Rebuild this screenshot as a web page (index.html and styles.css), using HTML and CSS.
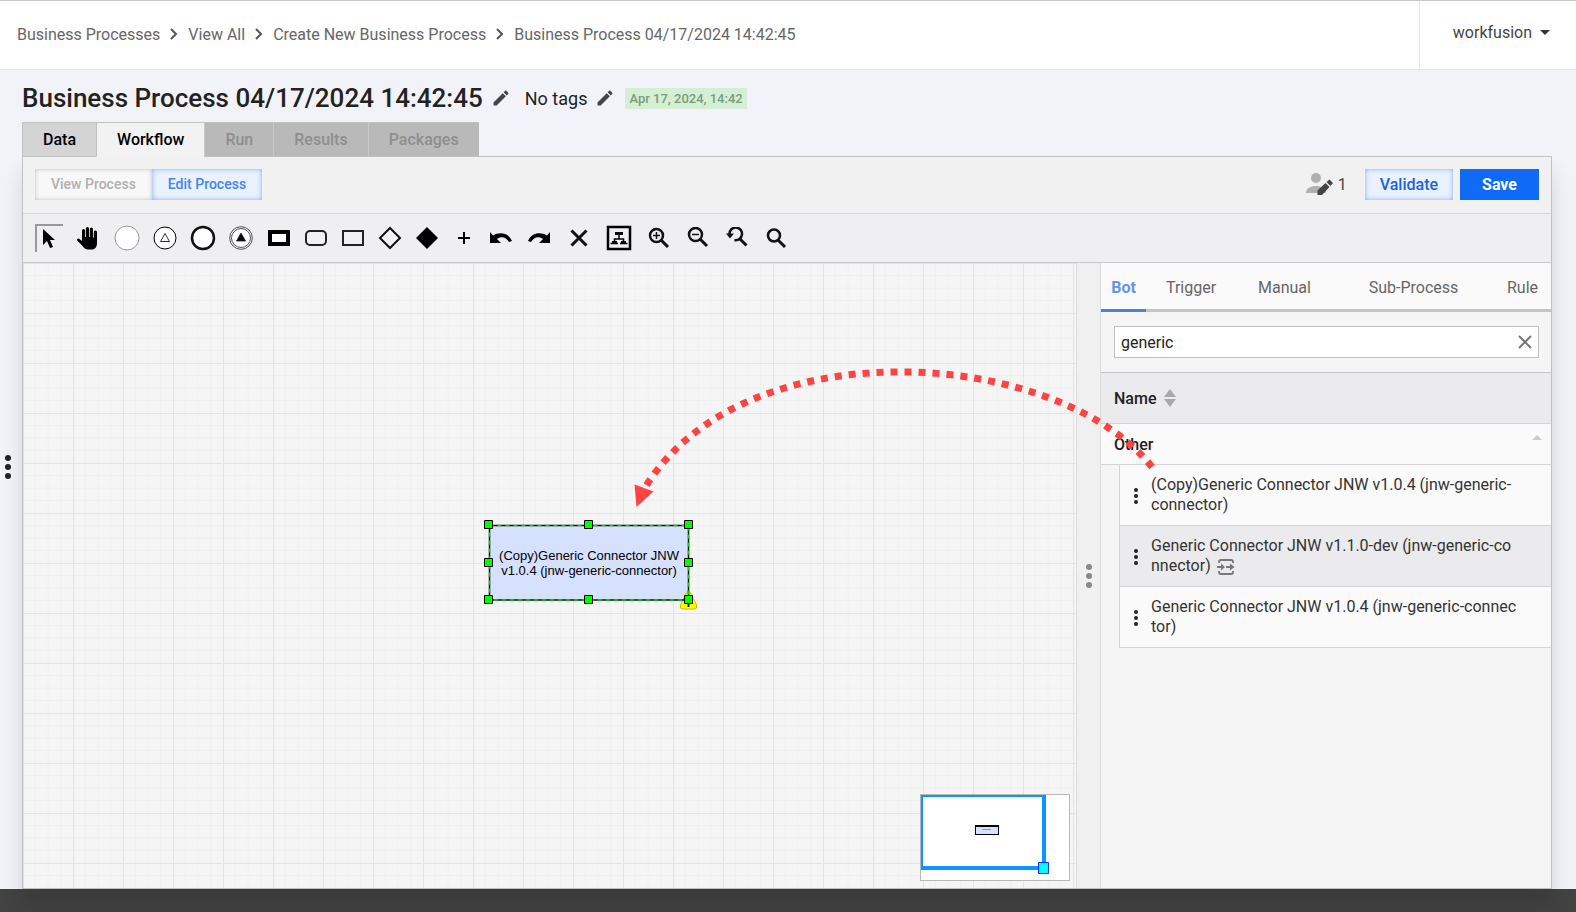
FILE: index.html
```html
<!DOCTYPE html>
<html lang="en">
<head>
    <meta charset="UTF-8">
    <meta name="viewport" content="width=device-width, initial-scale=1.0">
    <title>Business Process</title>
    <link rel="stylesheet" href="styles.css">
</head>
<body>
    <header class="topbar">
        <nav class="breadcrumbs" aria-label="Breadcrumb">
            <a href="#">Business Processes</a>
            <svg width="8" height="12" viewBox="0 0 8 12"><path d="M1 1l5 5-5 5" fill="none" stroke="#555" stroke-width="2"/></svg>
            <a href="#">View All</a>
            <svg width="8" height="12" viewBox="0 0 8 12"><path d="M1 1l5 5-5 5" fill="none" stroke="#555" stroke-width="2"/></svg>
            <a href="#">Create New Business Process</a>
            <svg width="8" height="12" viewBox="0 0 8 12"><path d="M1 1l5 5-5 5" fill="none" stroke="#555" stroke-width="2"/></svg>
            <a href="#">Business Process 04/17/2024 14:42:45</a>
        </nav>
        <button type="button" class="user-menu">workfusion
            <svg width="10" height="5" viewBox="0 0 10 5"><path d="M0 0h10L5 5z" fill="#333"/></svg>
        </button>
    </header>

    <main class="page">
        <button type="button" class="side-dots" aria-label="Open menu">
            <svg width="6" height="24" viewBox="0 0 6 24" fill="#222"><circle cx="3" cy="3" r="3"/><circle cx="3" cy="12" r="3"/><circle cx="3" cy="21" r="3"/></svg>
        </button>

        <div class="page-head">
            <h1>Business Process 04/17/2024 14:42:45</h1>
            <button type="button" class="edit-button" aria-label="Edit name">
                <svg width="20" height="20" viewBox="0 0 24 24"><path fill="#444" d="M3 17.250V21h3.750L17.810 9.940l-3.750-3.750zM20.710 7.040a1 1 0 0 0 0-1.410l-2.340-2.340a1 1 0 0 0-1.410 0l-1.830 1.830 3.750 3.750z"/></svg>
            </button>
            <span class="tags">No tags</span>
            <button type="button" class="edit-button" aria-label="Edit tags">
                <svg width="20" height="20" viewBox="0 0 24 24"><path fill="#444" d="M3 17.250V21h3.750L17.810 9.940l-3.750-3.750zM20.710 7.040a1 1 0 0 0 0-1.410l-2.340-2.340a1 1 0 0 0-1.410 0l-1.830 1.830 3.750 3.750z"/></svg>
            </button>
            <span class="date-badge">Apr 17, 2024, 14:42</span>
        </div>

        <div class="tabs">
            <button type="button" class="tab">Data</button>
            <button type="button" class="tab active">Workflow</button>
            <button type="button" class="tab" disabled>Run</button>
            <button type="button" class="tab" disabled>Results</button>
            <button type="button" class="tab" disabled>Packages</button>
        </div>

        <section class="panel">
            <div class="action-bar">
                <div class="mode-switch">
                    <button type="button" class="mode" disabled>View Process</button>
                    <button type="button" class="mode selected">Edit Process</button>
                </div>
                <div class="editors">
                    <svg width="28" height="22" viewBox="0 0 28 22">
                        <circle cx="10" cy="5" r="5" fill="#b0b0b0"/>
                        <path d="M0 20c0-5 5-7 10-7s10 2 10 7z" fill="#b0b0b0"/>
                        <path d="M11.500 17.500V22H16l7.500-8-4-4zM20.500 9l4 4 2.500-3-3.500-3.500z" fill="#444"/>
                    </svg>
                    <span>1</span>
                </div>
                <button type="button" class="validate">Validate</button>
                <button type="button" class="save">Save</button>
            </div>

            <div class="toolbar">
                <button type="button" class="tool pressed" aria-label="Select">
                    <svg width="28" height="28" viewBox="0 0 28 28"><path d="M7 4v16l4-4 3 7 3-1-3-7h5z"/></svg>
                </button>
                <button type="button" class="tool tool-wide" aria-label="Pan">
                    <svg width="24" height="24" viewBox="0 0 24 24"><path d="M6 13V4.500a1.500 1.500 0 0 1 3 0V11h.8V2.500a1.600 1.600 0 0 1 3.200 0V11h.8V3a1.600 1.600 0 0 1 3.200 0v8.500h.8V6a1.500 1.500 0 0 1 3.200 0v11c0 4-2 6.500-5 6.500h-4c-2.500 0-4-1.500-5.500-3.500L1.200 14.500c-.8-1.200.8-2.500 2-1.800L6 15z"/></svg>
                </button>
                <button type="button" class="tool" aria-label="Start">
                    <svg width="26" height="26" viewBox="0 0 26 26"><circle cx="13" cy="13" r="12" fill="#fff" stroke="#999"/></svg>
                </button>
                <button type="button" class="tool" aria-label="Start event">
                    <svg width="24" height="24" viewBox="0 0 24 24" fill="#fff" stroke="#000"><circle cx="12" cy="12" r="11"/><path d="M12 7.500l4.500 8h-9z" stroke-width=".8"/></svg>
                </button>
                <button type="button" class="tool" aria-label="End">
                    <svg width="26" height="26" viewBox="0 0 26 26"><circle cx="13" cy="13" r="11" fill="#fff" stroke="#111" stroke-width="2.500"/></svg>
                </button>
                <button type="button" class="tool" aria-label="End event">
                    <svg width="24" height="24" viewBox="0 0 24 24" fill="#fff" stroke="#222" stroke-width=".8"><circle cx="12" cy="12" r="11.300"/><circle cx="12" cy="12" r="9.500"/><path d="M12 7l4.500 8h-9z" fill="#000"/></svg>
                </button>
                <button type="button" class="tool tool-shape" aria-label="Task">
                    <svg width="22" height="16" viewBox="0 0 22 16"><path d="M2 2h18v12H2z" fill="#fff" stroke="#000" stroke-width="4"/></svg>
                </button>
                <button type="button" class="tool tool-shape" aria-label="Rounded task">
                    <svg width="22" height="16" viewBox="0 0 22 16"><rect x="1" y="1" width="20" height="14" rx="4" fill="#f1f1f3" stroke="#222" stroke-width="2"/></svg>
                </button>
                <button type="button" class="tool tool-shape" aria-label="Rectangle">
                    <svg width="22" height="16" viewBox="0 0 22 16"><path d="M1 1h20v14H1z" fill="#f1f1f3" stroke="#222" stroke-width="2"/></svg>
                </button>
                <button type="button" class="tool tool-shape" aria-label="Gateway">
                    <svg width="24" height="24" viewBox="0 0 24 24"><path d="M12 2l10 10-10 10L2 12z" fill="#f1f1f3" stroke="#111" stroke-width="2"/></svg>
                </button>
                <button type="button" class="tool tool-shape" aria-label="Filled gateway">
                    <svg width="24" height="24" viewBox="0 0 24 24"><path d="M12 1l11 11-11 11L1 12z"/></svg>
                </button>
                <button type="button" class="tool tool-shape" aria-label="Add">
                    <svg width="12" height="12" viewBox="0 0 12 12"><path d="M5 0h2v5h5v2H7v5H5V7H0V5h5z"/></svg>
                </button>
                <button type="button" class="tool tool-shape" aria-label="Undo">
                    <svg width="22" height="12" viewBox="0 0 22 12"><path d="M0 0l3 3.500C9 0 18 0 22 9l-3 1C16 4.500 11 4 7 7l4 4H0z"/></svg>
                </button>
                <button type="button" class="tool tool-wide" aria-label="Redo">
                    <svg width="22" height="12" viewBox="0 0 22 12"><path d="M22 0l-3 3.500C13 0 4 0 0 9l3 1C6 4.500 11 4 15 7l-4 4h11z"/></svg>
                </button>
                <button type="button" class="tool tool-wide" aria-label="Delete">
                    <svg width="18" height="18" viewBox="0 0 18 18"><path d="M1.500 1.500l15 15M16.500 1.500l-15 15" stroke="#111" stroke-width="3"/></svg>
                </button>
                <button type="button" class="tool tool-wide" aria-label="Layout">
                    <svg width="26" height="26" viewBox="0 0 26 26"><path d="M2 2h22v22H2z" fill="none" stroke="#000" stroke-width="2.500"/><path d="M9 7h8v3H9zM6 16h5v3H6zM15 16h5v3h-5z"/><path d="M13 9v5M8.500 17v-3h9v3M4.500 18.500h7.500M14 18.500h7.500" fill="none" stroke="#000" stroke-width="1.500"/></svg>
                </button>
                <button type="button" class="tool tool-zoom" aria-label="Zoom in">
                    <svg width="22" height="22" viewBox="0 0 22 22" fill="none" stroke="#111"><circle cx="8.500" cy="8.500" r="6.500" stroke-width="2.500"/><path d="M13 13l7 7" stroke-width="3"/><path d="M5 8.500h7M8.500 5v7" stroke-width="1.500"/></svg>
                </button>
                <button type="button" class="tool tool-zoom" aria-label="Zoom out">
                    <svg width="22" height="22" viewBox="0 0 22 22" fill="none" stroke="#111"><circle cx="8.500" cy="7.500" r="6.500" stroke-width="2.500"/><path d="M13 12l7 7" stroke-width="3"/><path d="M5 7.500h7" stroke-width="1.500"/></svg>
                </button>
                <button type="button" class="tool tool-zoom" aria-label="Reset zoom">
                    <svg width="22" height="22" viewBox="0 0 22 22" fill="none" stroke="#111"><path d="M3.500 7.500a6.300 6.300 0 1 1 5 5.500" stroke-width="2.500"/><path d="M13.500 11.500l7 7" stroke-width="3"/><path d="M0 6.500h8l-4 5z" fill="#111" stroke="none"/></svg>
                </button>
                <button type="button" class="tool tool-zoom" aria-label="Find">
                    <svg width="22" height="22" viewBox="0 0 22 22" fill="none" stroke="#111"><circle cx="9" cy="8.500" r="6" stroke-width="2.500"/><path d="M13 13l7 7" stroke-width="3"/></svg>
                </button>
            </div>

            <div class="workspace">
                <div class="canvas">
                    <svg class="grid" width="100%" height="100%">
                        <defs>
                            <pattern id="grid" width="50" height="50" patternUnits="userSpaceOnUse">
                                <path d="M12.500 0v50M25 0v50M37.500 0v50M0 12.500h50M0 25h50M0 37.500h50" fill="none" stroke="#f0f0f0"/>
                                <path d="M0 .5h50M.5 0v50" fill="none" stroke="#e4e4e4"/>
                            </pattern>
                        </defs>
                        <rect width="100%" height="100%" fill="url(#grid)"/>
                    </svg>

                    <div class="node">
                        <span>(Copy)Generic Connector JNW<br>v1.0.4 (jnw-generic-connector)</span>
                        <!-- selection frame with resize handles -->
                        <svg class="selection" width="220" height="95" viewBox="-10 -10 220 95">
                            <path d="M198 67q1.500-2 3 0l6.500 13q1 4-2 4h-12q-3 0-2-4z" fill="#ff0" stroke="#cb0"/>
                            <path d="M199.500 78v4" stroke="#222" stroke-width="2"/>
                            <path d="M.5.500h199v74.500H.5z" fill="none" stroke="#111" stroke-width="1.500"/>
                            <path d="M.5.500h199v74.500H.5z" fill="none" stroke="#0d0" stroke-width="1.500" stroke-dasharray="4 4"/>
                            <g fill="#0f0" stroke="#000">
                                <path d="M-4.500-4.500h8v8h-8zM95.500-4.500h8v8h-8zM195.500-4.500h8v8h-8zM-4.500 33.500h8v8h-8zM195.500 33.500h8v8h-8zM-4.500 70.500h8v8h-8zM95.500 70.500h8v8h-8zM195.500 70.500h8v8h-8z"/>
                            </g>
                        </svg>
                    </div>

                    <div class="minimap">
                        <svg width="148" height="85" viewBox="0 0 148 85">
                            <path d="M0 0h125v75H0zM2 2v69h119V2z" fill="#0a96ff" fill-rule="evenodd"/>
                            <path d="M54 30h24v10H54z"/>
                            <path d="M55 32h22v7H55z" fill="#d6e0ff"/>
                            <path d="M61 34.500h9" stroke="#999"/>
                            <path d="M117.500 67.500h10v11h-10z" fill="#0ff" stroke="#0a30ff"/>
                        </svg>
                    </div>
                </div>

                <div class="splitter">
                    <svg width="6" height="24" viewBox="0 0 6 24" fill="#888"><circle cx="3" cy="3" r="3"/><circle cx="3" cy="12" r="3"/><circle cx="3" cy="21" r="3"/></svg>
                </div>

                <aside class="library">
                    <div class="library-tabs">
                        <button type="button" class="library-tab current">Bot</button>
                        <button type="button" class="library-tab">Trigger</button>
                        <button type="button" class="library-tab">Manual</button>
                        <button type="button" class="library-tab">Sub-Process</button>
                        <button type="button" class="library-tab">Rule</button>
                    </div>
                    <div class="search">
                        <div class="search-box">
                            <input type="text" value="generic" aria-label="Search">
                            <button type="button" aria-label="Clear search">
                                <svg width="14" height="14" viewBox="0 0 14 14"><path d="M1 1l12 12M13 1L1 13" stroke="#777" stroke-width="2"/></svg>
                            </button>
                        </div>
                    </div>
                    <table class="library-list">
                        <thead>
                            <tr>
                                <th colspan="2">
                                    <div class="cell">Name
                                        <svg width="12" height="18" viewBox="0 0 12 18" fill="#a5a9ad"><path d="M6 0l6 8H0zM0 10h12l-6 8z"/></svg>
                                    </div>
                                </th>
                            </tr>
                        </thead>
                        <tbody>
                            <tr class="group">
                                <td colspan="2">
                                    <div class="cell"><span>Other</span>
                                        <svg width="10" height="5" viewBox="0 0 10 5"><path d="M0 5h10L5 0z" fill="#ccc"/></svg>
                                    </div>
                                </td>
                            </tr>
                            <tr class="item">
                                <td class="indent"></td>
                                <td>
                                    <div class="item-cell">
                                        <svg width="4" height="18" viewBox="0 0 4 18" fill="#222"><circle cx="2" cy="4" r="2"/><circle cx="2" cy="10" r="2"/><circle cx="2" cy="16" r="2"/></svg>
                                        <span>(Copy)Generic Connector JNW v1.0.4 (jnw-generic-<br>connector)</span>
                                    </div>
                                </td>
                            </tr>
                            <tr class="item highlighted">
                                <td class="indent"></td>
                                <td>
                                    <div class="item-cell">
                                        <svg width="4" height="18" viewBox="0 0 4 18" fill="#222"><circle cx="2" cy="4" r="2"/><circle cx="2" cy="10" r="2"/><circle cx="2" cy="16" r="2"/></svg>
                                        <span>Generic Connector JNW v1.1.0-dev (jnw-generic-co<br>nnector)
                                            <svg class="flow-icon" width="18" height="16" viewBox="0 0 18 16"><path d="M2 4V3q0-2 2-2h10q2 0 2 2v1M2 12v1q0 2 2 2h10q2 0 2-2v-1M0 8h6M9 8h6" fill="none" stroke="#777" stroke-width="1.800"/><path d="M4 4.500L8 8l-4 3.500zM13 4.500L17.500 8 13 11.500z" fill="#777"/></svg>
                                        </span>
                                    </div>
                                </td>
                            </tr>
                            <tr class="item">
                                <td class="indent"></td>
                                <td>
                                    <div class="item-cell">
                                        <svg width="4" height="18" viewBox="0 0 4 18" fill="#222"><circle cx="2" cy="4" r="2"/><circle cx="2" cy="10" r="2"/><circle cx="2" cy="16" r="2"/></svg>
                                        <span>Generic Connector JNW v1.0.4 (jnw-generic-connec<br>tor)</span>
                                    </div>
                                </td>
                            </tr>
                        </tbody>
                    </table>
                </aside>

                <!-- drag hint from the list to the canvas -->
                <svg class="drag-arrow" width="540" height="160" viewBox="620 360 540 160">
                    <path d="M1152 467C1058 348 746 326 646 486" fill="none" stroke="#ff4343" stroke-width="7" stroke-dasharray="7 7"/>
                    <path d="M634.500 484.500l19 7-17 15.500z" fill="#ff4343"/>
                </svg>
            </div>
        </section>
    </main>

    <footer class="footer"></footer>
</body>
</html>
```
FILE: styles.css
```css
* {
    box-sizing: border-box;
}
body {
    margin: 0;
    min-height: 100vh;
    display: flex;
    flex-direction: column;
    font-family: Roboto, Arial, sans-serif;
    font-size: 16px;
    color: #222;
    background-color: #f2f3f8;
}
button {
    font-family: inherit;
    font-size: 16px;
    padding: 0;
    border: none;
    background: none;
    cursor: pointer;
}
svg {
    display: block;
    flex-shrink: 0;
}

/* Top bar */
.topbar {
    display: flex;
    justify-content: space-between;
    height: 70px;
    background: #fff;
    border-top: 1px solid #c8c8c8;
    border-bottom: 1px solid #e4e5e9;
}
.breadcrumbs {
    display: flex;
    align-items: center;
    gap: 10px;
    padding: 0 0 2px 17px;
}
.breadcrumbs a {
    color: #666;
    text-decoration: none;
}
.user-menu {
    display: flex;
    align-items: center;
    gap: 8px;
    padding: 0 26px 6px 33px;
    border-left: 1px solid #e4e5e9;
    color: #444;
}

/* Page */
.page {
    flex: 1;
    display: flex;
    flex-direction: column;
    position: relative;
    padding: 0 24px 0 22px;
}
.side-dots {
    position: absolute;
    left: 5px;
    top: 385px;
}
.page-head {
    display: flex;
    align-items: center;
    height: 52px;
    padding-top: 4px;
}
.page-head h1 {
    margin: 0;
    font-size: 26px;
    font-weight: 500;
}
.edit-button {
    margin-left: 8px;
}
.tags {
    margin-left: 14px;
    font-size: 18px;
}
.date-badge {
    margin-left: 10px;
    padding: 0 4px;
    font-size: 13px;
    font-weight: 500;
    line-height: 21px;
    color: #7a9c7e;
    background: #d4efd4;
}
.tabs {
    display: flex;
    z-index: 1;
    margin-bottom: -1px;
}
.tab {
    height: 35px;
    padding: 0 20px;
    font-weight: 500;
    color: #000;
    background: #d4d4d4;
    border: 1px solid #c0c1c3;
    border-right: none;
}
.tab.active {
    background: #f2f2f2;
    border-bottom-color: #f2f2f2;
}
.tab:disabled {
    color: #8e8e8e;
    background: #b9b9b9;
    border-left-color: #c8c8c8;
}

/* Main panel */
.panel {
    flex: 1;
    display: flex;
    flex-direction: column;
    border: 1px solid #c0c1c3;
    background: #f1f1f1;
    box-shadow: 0 16px 20px rgba(0, 0, 0, 0.12);
}
.action-bar {
    display: flex;
    align-items: center;
    height: 57px;
    padding: 0 12px 2px;
    border-bottom: 1px solid #d6d6d8;
}
.mode-switch {
    display: flex;
    margin-right: auto;
}
.mode {
    height: 31px;
    padding: 0 16px;
    font-size: 14px;
    font-weight: 500;
    color: #b0b0b0;
    background: #f8f8f8;
    box-shadow: inset 0 0 4px #bbb;
}
.mode.selected {
    color: #4285f4;
    background: #eaf1ff;
    box-shadow: inset 0 0 5px #7fabf5;
}
.editors {
    display: flex;
    align-items: center;
    gap: 4px;
    margin-right: 18px;
    color: #444;
}
.validate,
.save {
    height: 31px;
    font-weight: 500;
}
.validate {
    padding: 0 15px;
    margin-right: 7px;
    color: #1a65d6;
    background: #eaf1ff;
    box-shadow: inset 0 0 5px #7fabf5;
}
.save {
    padding: 0 22px;
    font-weight: 700;
    color: #fff;
    background: #0f6bf5;
}
.toolbar {
    display: flex;
    align-items: center;
    gap: 10px;
    height: 49px;
    padding: 0 12px 1px;
    background: #efeff2;
    border-bottom: 1px solid #c8c8ca;
}
.tool {
    display: flex;
    align-items: center;
    justify-content: center;
    width: 28px;
    height: 28px;
}
.tool.pressed {
    border-top: 2px solid #999;
    border-left: 2px solid #999;
}
.tool-wide {
    width: 30px;
}
.tool-shape {
    width: 27px;
}
.tool-zoom {
    width: 29px;
}

/* Workspace */
.workspace {
    flex: 1;
    display: flex;
    position: relative;
}
.canvas {
    flex: 1;
    position: relative;
    background: #f5f5f5;
}
.grid {
    position: absolute;
}
.node {
    position: absolute;
    left: 466px;
    top: 262px;
    display: flex;
    align-items: center;
    justify-content: center;
    width: 200px;
    height: 75px;
    font-family: "Liberation Sans", Arial, sans-serif;
    font-size: 13px;
    line-height: 15px;
    text-align: center;
    color: #000;
    background: #d6e1ff;
}
.selection {
    position: absolute;
    left: -10px;
    top: -10px;
}
.minimap {
    position: absolute;
    right: 6px;
    bottom: 7px;
    border: 1px solid #bbb8b8;
    background: #fff;
}
.splitter {
    display: flex;
    align-items: center;
    justify-content: center;
    width: 25px;
    background: #f0f0f0;
    border: 1px solid #dcdcdc;
    border-width: 0 1px;
}
.drag-arrow {
    position: absolute;
    left: 597px;
    top: 97px;
    pointer-events: none;
}

/* Library */
.library {
    width: 450px;
    background: #f5f5f5;
}
.library-tabs {
    display: grid;
    grid-template-columns: 45fr 90fr 97fr 161fr 57fr;
}
.library-tab {
    height: 49px;
    padding-top: 2px;
    color: #666;
    background: #fafafa;
    border-bottom: 3px solid #c4c4c4;
}
.library-tab.current {
    font-weight: 700;
    color: #6495ed;
    border-bottom-color: #5080d0;
}
.search {
    padding: 14px 12px 14px 13px;
    border-bottom: 1px solid #c4c4c6;
}
.search-box {
    display: flex;
    align-items: center;
    height: 32px;
    padding: 0 6px;
    background: #fff;
    border: 1px solid #bfc0c2;
}
.search-box input {
    flex: 1;
    padding: 0;
    border: none;
    outline: none;
    font-family: inherit;
    font-size: 16px;
    color: #222;
    background: none;
}
.library-list {
    width: 100%;
    border-spacing: 0;
    text-align: left;
}
.library-list th,
.library-list td {
    padding: 0;
    border-bottom: 1px solid #d4d4d6;
}
.library-list th {
    font-weight: 500;
    background: #ebebed;
}
.cell {
    display: flex;
    align-items: center;
    gap: 8px;
    height: 50px;
    padding: 0 13px;
}
.group td {
    font-weight: 500;
    background: #fafafa;
}
.group .cell {
    justify-content: space-between;
    height: 40px;
    padding-right: 9px;
}
.group svg {
    margin-bottom: 14px;
}
.library-list .indent {
    width: 18px;
    border-bottom: none;
}
.item td + td {
    border-left: 1px solid #d4d4d6;
    background: #fafafa;
}
.item.highlighted td + td {
    background: #ebebed;
}
.item-cell {
    display: flex;
    align-items: center;
    gap: 13px;
    padding: 10px 14px;
    line-height: 20px;
    color: #333;
}
.flow-icon {
    display: inline-block;
    margin-left: 2px;
    vertical-align: middle;
}

.footer {
    height: 23px;
    background: #424242;
}
```
